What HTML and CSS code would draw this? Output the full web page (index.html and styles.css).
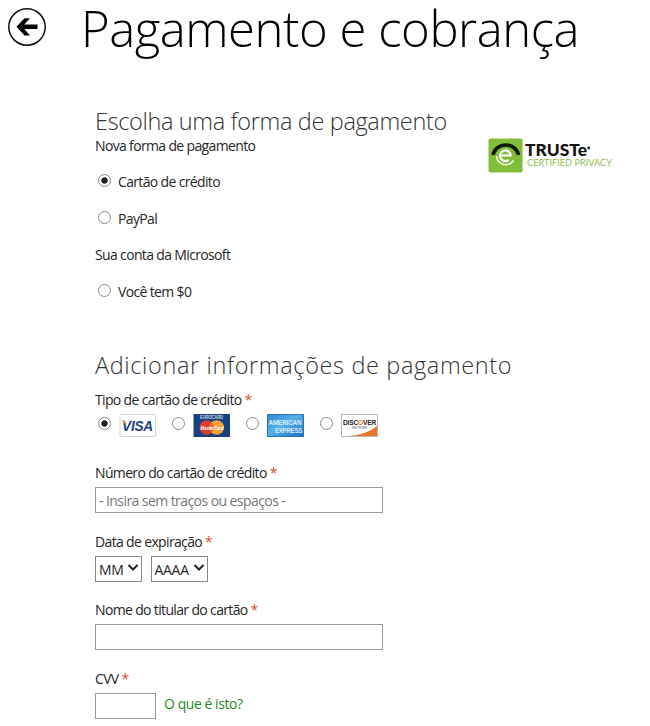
FILE: index.html
```html
<!DOCTYPE html>
<html lang="pt-BR">
  <head>
    <meta charset="UTF-8" />
    <meta name="viewport" content="width=device-width, initial-scale=1.0" />
    <title>Pagamento e cobrança</title>
    <link rel="stylesheet" href="styles.css">
  </head>
  <body>
    <header class="header">
      <svg class="back" width="40" height="40" viewBox="0 0 40 40">
        <circle cx="20" cy="20" r="18.2" fill="none" stroke="#111" stroke-width="1.5" />
        <path d="M9.5 19.8 L17.5 11.2 H23 L17.3 17.5 H30.5 V22 H17.3 L23 28.4 H17.5 Z" fill="#000" />
      </svg>
      <h1>Pagamento e cobrança</h1>
    </header>

    <form class="container">
      <section class="method">
        <div class="options">
          <h2 class="choose">Escolha uma forma de pagamento</h2>
          <p class="new-method">Nova forma de pagamento</p>
          <label class="option"><input type="radio" name="method" checked /><span>Cartão de crédito</span></label>
          <label class="option"><input type="radio" name="method" /><span>PayPal</span></label>
          <p class="account">Sua conta da Microsoft</p>
          <label class="option"><input type="radio" name="method" /><span>Você tem $0</span></label>
        </div>
        <svg class="truste" width="126" height="36" viewBox="0 0 126 36">
          <rect x="0.5" y="0.5" width="34" height="34" rx="2" fill="#80bd3a" />
          <path d="M5 17 A13 12.5 0 0 1 30.5 17" fill="none" stroke="#10180a" stroke-width="3.6" />
          <path d="M12.5 17.5 H22.6 A5.3 5.3 0 1 0 20.5 22" fill="none" stroke="#fff" stroke-width="2.2" />
          <path d="M8.5 18 A9.3 9.3 0 0 0 25.5 22.5" fill="none" stroke="#e9f5d8" stroke-width="1.8" />
          <text x="37" y="18" class="truste-name" textLength="62" lengthAdjust="spacingAndGlyphs">TRUSTe</text>
          <circle cx="100.8" cy="10" r="1.4" fill="#222" />
          <text x="39" y="27.5" class="truste-tag" textLength="85" lengthAdjust="spacingAndGlyphs">CERTIFIED PRIVACY</text>
        </svg>
      </section>

      <section class="details">
        <h2 class="add">Adicionar informações de pagamento</h2>

        <div class="field type-field">
          <label>Tipo de cartão de crédito <i>*</i></label>
          <div class="cards">
            <input type="radio" name="card" checked />
            <svg width="37" height="23" viewBox="0 0 37 23">
              <rect x="1" y="0.5" width="35.5" height="22" rx="1.5" fill="#fff" stroke="#d3d3d3" />
              <text x="3" y="17" class="visa" textLength="31" lengthAdjust="spacingAndGlyphs">VISA</text>
              <path d="M2.5 6.3 H5.8 L7.3 11 Z" fill="#e9a536" />
            </svg>
            <input type="radio" name="card" />
            <svg width="37" height="23" viewBox="0 0 37 23">
              <rect x="0.5" width="36.5" height="23" fill="#17417f" />
              <text x="7" y="5.3" class="euro" textLength="23" lengthAdjust="spacingAndGlyphs">EUROCARD</text>
              <circle cx="13.8" cy="13.5" r="7.3" fill="#dc3b2b" />
              <circle cx="23.7" cy="13.5" r="7.3" fill="#f2a23b" />
              <path d="M18.7 8.2 A7.3 7.3 0 0 1 18.7 18.8 A7.3 7.3 0 0 1 18.7 8.2" fill="#e66c2f" />
              <text x="7.5" y="15.6" class="master" textLength="23" lengthAdjust="spacingAndGlyphs">MasterCard</text>
            </svg>
            <input type="radio" name="card" />
            <svg width="37" height="23" viewBox="0 0 37 23">
              <defs>
                <linearGradient id="amex" x1="0" y1="0" x2="1" y2="1">
                  <stop offset="0" stop-color="#2f86cf" />
                  <stop offset="0.45" stop-color="#58b1ea" />
                  <stop offset="1" stop-color="#176dbb" />
                </linearGradient>
              </defs>
              <rect x="0.5" y="0.5" width="36" height="22" fill="url(#amex)" stroke="#2876b8" />
              <text x="1.5" y="10.5" class="amex" textLength="33" lengthAdjust="spacingAndGlyphs">AMERICAN</text>
              <text x="8" y="18.5" class="amex" textLength="27" lengthAdjust="spacingAndGlyphs">EXPRESS</text>
            </svg>
            <input type="radio" name="card" />
            <svg width="37" height="23" viewBox="0 0 37 23">
              <rect x="0.5" y="0.5" width="36" height="22" fill="#fff" stroke="#b9b9b9" />
              <path d="M8 22 Q26 20.5 36 12 V22 Z" fill="#ec7424" />
              <text x="2" y="11" class="discover" textLength="33" lengthAdjust="spacingAndGlyphs">DISC<tspan fill="#ec7424">O</tspan>VER</text>
              <text x="11" y="14.5" class="network" textLength="15">NETWORK</text>
            </svg>
          </div>
        </div>

        <div class="field">
          <label>Número do cartão de crédito <i>*</i></label>
          <input class="text" type="text" placeholder="- Insira sem traços ou espaços -" />
        </div>

        <div class="field">
          <label>Data de expiração <i>*</i></label>
          <div class="row">
            <div class="select month">
              <span>MM</span>
              <svg width="12" height="8" viewBox="0 0 12 8"><path d="M1.5 1 L6 5.5 L10.5 1" /></svg>
            </div>
            <div class="select year">
              <span>AAAA</span>
              <svg width="12" height="8" viewBox="0 0 12 8"><path d="M1.5 1 L6 5.5 L10.5 1" /></svg>
            </div>
          </div>
        </div>

        <div class="field">
          <label>Nome do titular do cartão <i>*</i></label>
          <input class="text" type="text" />
        </div>

        <div class="field">
          <label>CVV <i>*</i></label>
          <div class="row">
            <input class="text cvv" type="text" />
            <a class="help">O que é isto?</a>
          </div>
        </div>
      </section>
    </form>
  </body>
</html>
```
FILE: styles.css
```css
* {
  box-sizing: border-box;
}
body {
  margin: 0;
  height: 726px;
  overflow: hidden;
  background: #fff;
  color: #262626;
  font-family: "Open Sans", "Noto Sans", sans-serif;
  font-size: 14px;
  line-height: 20px;
  letter-spacing: -0.65px;
}
h1,
h2,
p {
  margin: 0;
  font-weight: 300;
}
p {
  font-weight: 400;
}
.header {
  display: flex;
  height: 106px;
  padding-left: 7px;
}
.back {
  margin-top: 7px;
}
h1 {
  margin-left: 34px;
  font-size: 49px;
  line-height: 56px;
  letter-spacing: -0.45px;
  color: #000;
  white-space: nowrap;
}
h2 {
  font-size: 23.5px;
  line-height: 30px;
  color: #333;
  white-space: nowrap;
}
.choose {
  letter-spacing: -0.35px;
}
.add {
  letter-spacing: 0.63px;
}
.container {
  padding-left: 95px;
}
.method {
  display: flex;
  height: 244px;
}
.options {
  width: 393px;
}
.truste {
  margin-top: 32px;
}
.truste-name {
  font: 900 17px Lato, sans-serif;
  letter-spacing: 0;
  fill: #111;
}
.truste-tag {
  font: 9px Lato, sans-serif;
  letter-spacing: 0;
  fill: #8dc04e;
}
.option {
  display: flex;
  height: 20px;
  margin-bottom: 16.5px;
}
.option span {
  margin-left: 7px;
}
.new-method,
.account {
  margin-bottom: 16.3px;
}
input[type="radio"] {
  appearance: none;
  flex: none;
  width: 13px;
  height: 13px;
  margin: 2px 0 0 3px;
  border: 1px solid #8a8a8a;
  border-radius: 50%;
  background: #fff;
}
input[type="radio"]:checked {
  background: radial-gradient(circle, #222 2.8px, #fff 3.6px);
}
.field {
  margin-bottom: 18.5px;
}
.field label {
  display: block;
  margin-bottom: 4px;
}
.field i {
  font-style: normal;
  color: #d0502f;
}
.type-field {
  margin: 10px 0 26px;
}
.cards {
  display: flex;
  height: 23px;
}
.cards input[type="radio"] {
  margin-top: 3px;
}
.cards svg {
  margin: 0 13px 0 8px;
  letter-spacing: -0.2px;
}
.visa {
  font: italic bold 15px "Liberation Sans", sans-serif;
  fill: #1b3c86;
}
.euro {
  font: bold 4.5px "Liberation Sans", sans-serif;
  fill: #c9d4e6;
}
.master {
  font: italic bold 6px "Liberation Sans", sans-serif;
  fill: #fff;
}
.amex {
  font: bold 7.5px "Liberation Sans", sans-serif;
  fill: #d9eefb;
}
.discover {
  font: bold 8px "Liberation Sans", sans-serif;
  fill: #222;
}
.network {
  font: 3px "Liberation Sans", sans-serif;
  fill: #555;
}
.text {
  display: block;
  width: 287.5px;
  height: 26px;
  padding: 0 3px;
  border: 1px solid #999;
  font: inherit;
  letter-spacing: -0.57px;
}
.text::placeholder {
  color: #767676;
}
.row {
  display: flex;
}
.select {
  display: flex;
  align-items: center;
  justify-content: space-between;
  height: 26px;
  padding: 2px 2px 0 3px;
  border: 1px solid #888;
  letter-spacing: -0.3px;
}
.select svg {
  margin: -3px 0 0;
}
.select path {
  fill: none;
  stroke: #222;
  stroke-width: 2;
}
.month {
  width: 46.5px;
}
.year {
  width: 57.5px;
  margin-left: 9px;
}
.cvv {
  width: 61px;
}
.help {
  margin: 1px 0 0 8px;
  color: #1e8a1e;
  letter-spacing: -0.45px;
}
```
